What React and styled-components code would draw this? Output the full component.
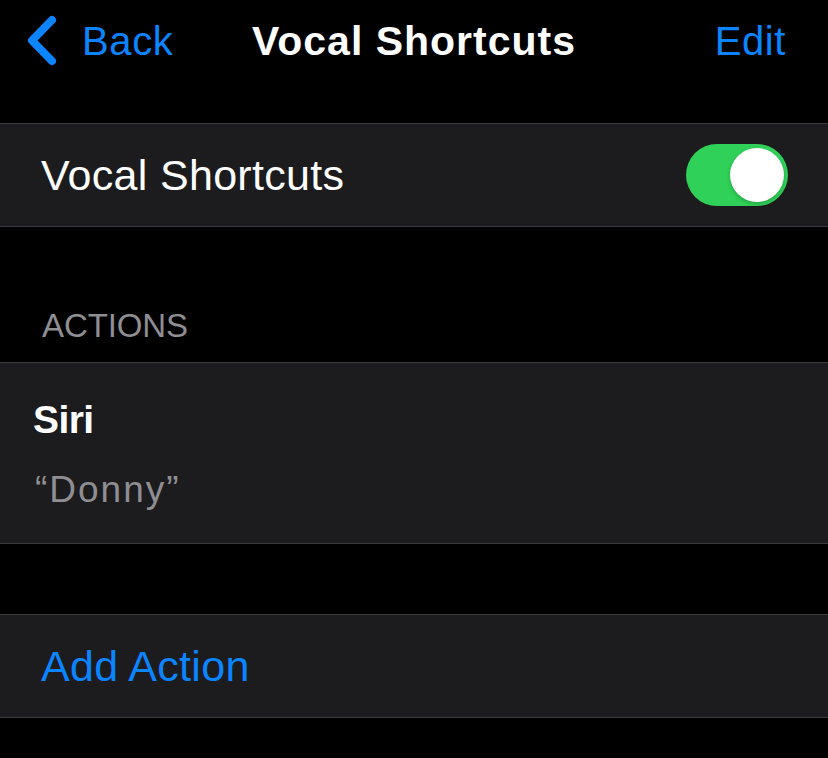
import React, { useState } from 'react';
import styled, { createGlobalStyle } from 'styled-components';

const GlobalStyle = createGlobalStyle`
  html, body {
    margin: 0;
    padding: 0;
    background: #000;
  }
  body {
    font-family: "Liberation Sans", Arial, sans-serif;
    color: #fff;
  }
`;

const Screen = styled.div`
  width: 828px;
  min-height: 758px;
  background: #000;
`;

const NavBar = styled.div`
  height: 82px;
  display: grid;
  grid-template-columns: 1fr auto 1fr;
  align-items: center;
  margin-bottom: 41px;
`;

const NavButton = styled.button`
  display: flex;
  align-items: center;
  gap: 24px;
  background: none;
  border: none;
  padding: 0;
  color: #0a84ff;
  font-family: inherit;
  font-size: 40px;
  line-height: 40px;
  letter-spacing: 0.6px;
  cursor: pointer;
  justify-self: ${(p) => (p.$right ? 'end' : 'start')};
  margin: ${(p) => (p.$right ? '0 42px 0 0' : '0 0 0 26px')};
`;

const NavTitle = styled.div`
  font-size: 41px;
  line-height: 41px;
  font-weight: 700;
  letter-spacing: 1px;
  color: #fff;
`;

const Group = styled.div`
  background: #1c1c1e;
  border-top: 1px solid #3a3a3c;
  border-bottom: 1px solid #3a3a3c;
  margin-bottom: ${(p) => p.$gap || 0}px;
`;

const Row = styled.div`
  height: ${(p) => p.$height || 102}px;
  display: flex;
  align-items: center;
  justify-content: space-between;
  padding: 0 40px 0 41px;
  box-sizing: border-box;
`;

const RowLabel = styled.span`
  font-size: 43px;
  line-height: 43px;
  color: ${(p) => p.$color || '#fff'};
  letter-spacing: 0.3px;
`;

const Toggle = styled.button`
  width: 102px;
  height: 62px;
  border-radius: 31px;
  border: none;
  padding: 4px;
  display: flex;
  justify-content: ${(p) => (p.$on ? 'flex-end' : 'flex-start')};
  background: ${(p) => (p.$on ? '#30d158' : '#39393d')};
  cursor: pointer;
  box-sizing: border-box;
`;

const Knob = styled.span`
  width: 54px;
  height: 54px;
  border-radius: 50%;
  background: #fff;
  box-shadow: 0 2px 4px rgba(0, 0, 0, 0.2);
`;

const SectionHeader = styled.div`
  padding: 82px 41px 20px 42px;
  font-size: 33px;
  line-height: 33px;
  color: #8e8e93;
  letter-spacing: -0.1px;
`;

const ActionCell = styled.div`
  padding: 36px 33px 35px;
  display: flex;
  flex-direction: column;
  gap: 30px;
`;

const ActionTitle = styled.div`
  font-size: 39px;
  line-height: 42px;
  font-weight: 700;
  letter-spacing: -0.6px;
`;

const ActionPhrase = styled.div`
  font-size: 37px;
  line-height: 37px;
  color: #8e8e93;
  letter-spacing: 2px;
  padding-left: 2px;
`;

const Chevron = () => (
  <svg width="32" height="52" viewBox="0 0 32 52">
    <polyline
      points="26,5 6,25.5 26,46"
      fill="none"
      stroke="#0a84ff"
      strokeWidth="8"
      strokeLinecap="round"
      strokeLinejoin="round"
    />
  </svg>
);

export default function App() {
  const [ativo, setAtivo] = useState(true);

  return (
    <Screen>
      <GlobalStyle />
      <NavBar>
        <NavButton>
          <Chevron />
          Back
        </NavButton>
        <NavTitle>Vocal Shortcuts</NavTitle>
        <NavButton $right>Edit</NavButton>
      </NavBar>

      <Group>
        <Row>
          <RowLabel>Vocal Shortcuts</RowLabel>
          <Toggle $on={ativo} onClick={() => setAtivo(!ativo)}>
            <Knob />
          </Toggle>
        </Row>
      </Group>

      <SectionHeader>ACTIONS</SectionHeader>

      <Group $gap={70}>
        <ActionCell>
          <ActionTitle>Siri</ActionTitle>
          <ActionPhrase>“Donny”</ActionPhrase>
        </ActionCell>
      </Group>

      <Group>
        <Row>
          <RowLabel $color="#0a84ff">Add Action</RowLabel>
        </Row>
      </Group>
    </Screen>
  );
}
